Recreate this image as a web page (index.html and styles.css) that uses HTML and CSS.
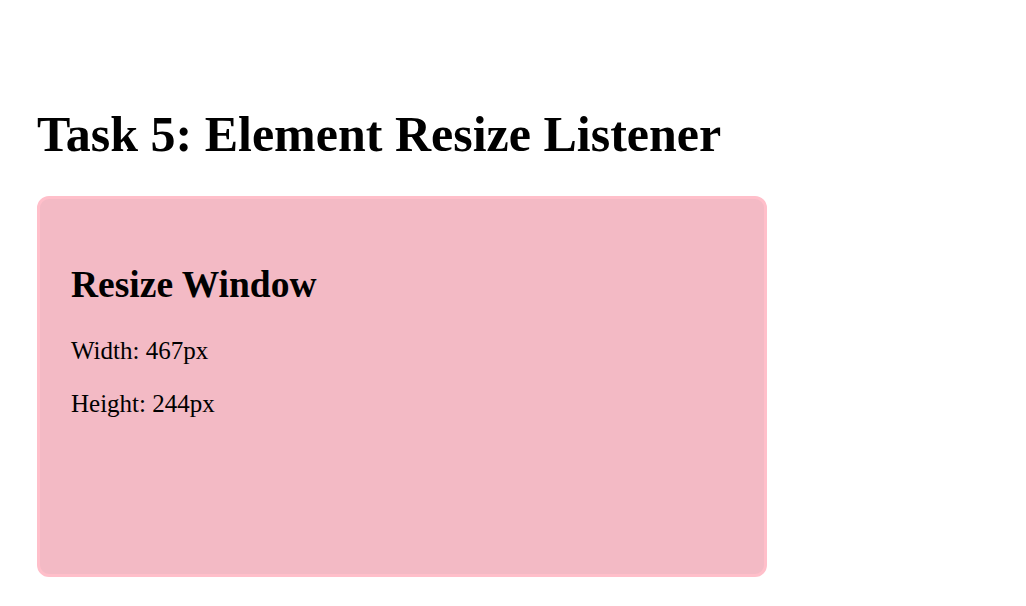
FILE: index.html
```html
<!DOCTYPE html>
<html lang="en">
<head>
<meta charset="utf-8">
<title>Task 5: Element Resize Listener</title>
<link rel="stylesheet" href="styles.css">
</head>
<body>
<main class="page">
  <h1 class="title">Task 5: Element Resize Listener</h1>
  <section class="resize-box">
    <h2 class="box-title">Resize Window</h2>
    <p class="dim">Width: 467px</p>
    <p class="dim">Height: 244px</p>
  </section>
</main>
</body>
</html>
```

FILE: styles.css
```css
html, body {
  margin: 0;
  padding: 0;
  background: #ffffff;
}

body {
  font-family: "Liberation Serif", "Times New Roman", serif;
  color: #000000;
}

.page {
  padding: 71px 0 0 37px;
}

.title {
  font-size: 50px;
  font-weight: bold;
  line-height: normal;
  margin: 33.5px 0 33.5px 0;
}

.resize-box {
  box-sizing: border-box;
  width: 730px;
  height: 381px;
  border: 3px solid #ffbfca;
  border-radius: 12px;
  background: #f3bac5;
  padding: 0 31px;
  display: flow-root;
}

.box-title {
  font-size: 37.5px;
  font-weight: bold;
  line-height: normal;
  margin: 64px 0 31px 0;
}

.dim {
  font-size: 25px;
  line-height: normal;
  margin: 25px 0;
}
```
